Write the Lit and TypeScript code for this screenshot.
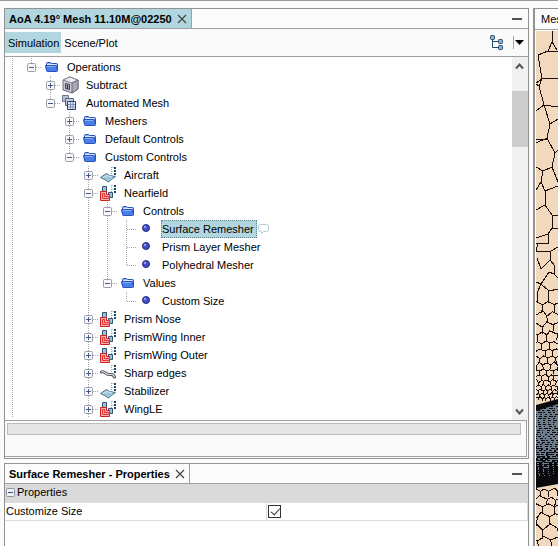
import { LitElement, html, svg, css } from "lit";
import { customElement } from "lit/decorators.js";
import { classMap } from "lit/directives/class-map.js";

// Guide codes, one per column: "|" line, " " blank, "+"/"-" expander (line goes on),
// "s" expander "-" that ends its line, "L" last leaf, "T" leaf with more below.
type Node = { guides: string; icon: string; label: string; selected?: boolean };

const NODES: Node[] = [
  { guides: "|s", icon: "folder", label: "Operations" },
  { guides: "| +", icon: "cube", label: "Subtract" },
  { guides: "| s", icon: "mesh", label: "Automated Mesh" },
  { guides: "|  +", icon: "folder", label: "Meshers" },
  { guides: "|  +", icon: "folder", label: "Default Controls" },
  { guides: "|  s", icon: "folder", label: "Custom Controls" },
  { guides: "|   +", icon: "surface", label: "Aircraft" },
  { guides: "|   -", icon: "volume", label: "Nearfield" },
  { guides: "|   |-", icon: "folder", label: "Controls" },
  { guides: "|   ||T", icon: "dot", label: "Surface Remesher", selected: true },
  { guides: "|   ||T", icon: "dot", label: "Prism Layer Mesher" },
  { guides: "|   ||L", icon: "dot", label: "Polyhedral Mesher" },
  { guides: "|   |s", icon: "folder", label: "Values" },
  { guides: "|   | L", icon: "dot", label: "Custom Size" },
  { guides: "|   +", icon: "volume", label: "Prism Nose" },
  { guides: "|   +", icon: "volume", label: "PrismWing Inner" },
  { guides: "|   +", icon: "volume", label: "PrismWing Outer" },
  { guides: "|   +", icon: "curve", label: "Sharp edges" },
  { guides: "|   +", icon: "surface", label: "Stabilizer" },
  { guides: "|   +", icon: "volume", label: "WingLE" },
];

const hierarchy = svg`
  <path d="M11.500 1v8" stroke="#8fa3b0" stroke-dasharray="1 1"/>
  <path d="M12 1.500h2M12 5.500h2" stroke="#c3cfd6"/>
  <path d="M14 1h2v2h-2zM14 4h2v2h-2zM14 7h2v2h-2z" fill="#1c4a66"/>`;

const ICONS: Record<string, unknown> = {
  folder: svg`
    <path d="M3.500 12.500v-7q0-1 1-1h3l1 1h5q1 0 1 1v6z" fill="#8fb2f5" stroke="#2c50ad"/>
    <path d="M4 6.500h9" stroke="#dbe8ff"/>
    <path d="M2.500 7.500h10q1 0 1 1l1 4q0 1-1 1h-9q-1 0-1-1z" fill="#4c7ee8" stroke="#2752bd"/>
    <path d="M4 8.500h8" stroke="#86abf7"/>`,
  cube: svg`
    <path d="M1 4l7-3 8 3v9l-6 4-9-3z" fill="#c9c9d6" stroke="#6c6c79"/>
    <path d="M1 4l7-3 8 3-6 3z" fill="#ececf2" stroke="#858593"/>
    <path d="M10 7l6-3v9l-6 4z" fill="#a9a9b8" stroke="#6c6c79"/>
    <path d="M3.500 7.500l4 1v5l-4-1z" fill="#a0a0b2" stroke="#454555"/>
    <path d="M5.500 9v4" stroke="#2f2f3e"/>`,
  mesh: svg`
    <path d="M0.500 1.500h6v6h-6z" fill="#b9c0d4" stroke="#6d7590"/>
    <path d="M3.500 4.500h8v7h-8z" fill="#c6cde0" stroke="#59637f"/>
    <path d="M5.500 7.500h8v8h-8z" fill="#e6ebf7" stroke="#2c3d6b"/>
    <path d="M8.500 8v7M11 8v7M6 10.500h7M6 13h7" stroke="#8091b8"/>`,
  surface: svg`${hierarchy}
    <path d="M0.500 11.500l6-4 3 2 6 1-4 3-3 2.500-3-2z" fill="#9fc6d8" stroke="#4a7488"/>
    <path d="M3 11.500l4-2 5 1.500" stroke="#d5eaf2" fill="none"/>`,
  volume: svg`${hierarchy}
    <path d="M2.500 2.500h4v7h-4zM8.500 8.500h4v5h-4z" fill="#a3bdd4" stroke="#31546f"/>
    <path d="M0.500 7.500h6v3h3v6h-9z" fill="#ffb3b0" stroke="#d21f1f"/>
    <path d="M2.500 9.500h2v3h5v2h-7z" fill="#ff9b9b" stroke="#e03a3a"/>`,
  curve: svg`${hierarchy}
    <path d="M1.500 8q2-1 4 1t5 1.500 4 2.500" stroke="#4a4a54" stroke-width="3" fill="none" stroke-linecap="round"/>
    <path d="M1.500 8q2-1 4 1t5 1.500 4 2.500" stroke="#dcdce4" stroke-width="1.200" fill="none" stroke-linecap="round"/>`,
  dot: svg`
    <circle cx="8" cy="8" r="3.500" fill="#3c4cc4" stroke="#20297c"/>
    <circle cx="7" cy="7" r="1.300" fill="#8f9cf5"/>`,
};

function guide(code: string) {
  const up = code !== " ";
  const down = "|+-T".includes(code) && up;
  const branch = "+-sTL".includes(code) && up;
  const box = "+-s".includes(code) && up;
  return svg`
    ${up ? svg`<path d="M7.500 0v9" class="dots"/>` : ""}
    ${down ? svg`<path d="M7.500 10v8" class="dots"/>` : ""}
    ${branch ? svg`<path d="M8 9.500h9" class="dots"/>` : ""}
    ${box ? svg`<rect x="3.500" y="5.500" width="8" height="8" rx="1" fill="#f6f7f9" stroke="#9a9ea6"/>
      <path d="M5 9.500h5" stroke="#4a5a8a"/>` : ""}
    ${code === "+" ? svg`<path d="M7.500 7v5" stroke="#4a5a8a"/>` : ""}`;
}

// Rows of jittered honeycomb cells; the size is interpolated from top to bottom.
function honeycomb(y0: number, y1: number, s0: number, s1: number) {
  let seed = 11;
  const rnd = () => (seed = (seed * 16807) % 2147483647) / 2147483647 - 0.5;
  let d = "";
  let y = y0;
  let odd = 0;
  while (y < y1) {
    const s = s0 + ((s1 - s0) * (y - y0)) / (y1 - y0);
    let k = 0;
    for (let x = -s + (odd * s) / 2; x < 24 + s; x += s / 2, k++) {
      const px = x + rnd() * s * 0.3;
      const py = y + (k % 2 ? s * 0.16 : -s * 0.16) + rnd() * s * 0.25;
      d += `${k ? "L" : "M"}${px.toFixed(1)} ${py.toFixed(1)}`;
      if (k % 2) d += `l${(rnd() * s * 0.2).toFixed(1)} ${(s * 0.6).toFixed(1)}M${px.toFixed(1)} ${py.toFixed(1)}`;
    }
    y += s * 0.85;
    odd = 1 - odd;
  }
  return d;
}

function dashes() {
  let seed = 5;
  const rnd = () => (seed = (seed * 16807) % 2147483647) / 2147483647;
  let d = "";
  for (let y = 406; y < 482; y += 2) {
    const dense = y > 440 ? (y - 440) / 30 : 0;
    for (let x = -rnd() * 4; x < 22; x += 5) {
      d += `M${x.toFixed(0)} ${y + 0.5}h${(1 + rnd() * 3 + dense * 3).toFixed(0)}`;
      if (rnd() < dense) d += `M${x.toFixed(0)} ${y + 1.5}h${(1 + dense * 3).toFixed(0)}`;
    }
  }
  return d;
}

const COARSE =
  "M16 31V42L12 51L2 55L6 79L0 83M16 42L21 50M12 51H22M6 79L22 78M6 79L3 86L0 84M3 86L8 105L22 107" +
  "M8 105L0 111M8 105L14 124L22 119M14 124L11 138L0 143M0 139H11M11 138L19 153L16 167L7 171L0 167" +
  "M19 153L22 150M16 167L22 182M7 171L5 182L9 191V205L0 210M5 182L0 190M9 191L22 186M9 205L16 215H22" +
  "M16 215V228L12 234V243H0M16 228H22M12 234L0 238M2 243L0 251H15L14 260L19 266L18 274L13 272L5 284L0 282" +
  "M15 251L22 247M14 260L5 269L1 258M18 274L22 278M5 284L13 291L22 289M5 284L1 293V302M13 291L12 303";

@customElement("app-root")
export class AppRoot extends LitElement {
  static styles = css`
    :host {
      display: block;
      min-height: 100vh;
      box-sizing: border-box;
      border-top: 1px solid #9b9b9b;
      background: #fcfbfc;
      color: #000;
      font: 11px/18px "Liberation Sans", Arial, sans-serif;
    }
    * { box-sizing: border-box; }
    button { font: inherit; color: inherit; border: 0; padding: 0; margin: 0; background: none; display: block; }
    svg { display: block; flex: none; }
    .page {
      display: grid;
      grid-template-columns: minmax(0, 1fr) 25px;
      gap: 4px;
      min-height: calc(100vh - 1px);
      padding: 7px 0 0 4px;
    }
    .column { display: flex; flex-direction: column; gap: 4px; }
    .panel { border: 1px solid #929292; display: flex; flex-direction: column; }
    .fill { flex: 1; border-bottom: 0; background: #fff; }
    .title { display: flex; align-items: stretch; height: 20px; background: #fbfbfb; border-bottom: 1px solid #a0a0a0; }
    .tab { display: flex; align-items: center; gap: 5px; margin: 0; padding: 0 4px 0 4px; font-size: 11px; font-weight: bold; border-right: 1px solid #a0a0a0; white-space: nowrap; }
    .active { background: #b1d6df; }
    .minimise { margin-left: auto; padding-right: 6px; }
    .toolbar { display: flex; align-items: center; height: 28px; background: #fafafa; border-bottom: 1px solid #a0a0a0; }
    .mode { height: 21px; padding: 0 2px 0 3px; }
    .tools { display: flex; align-items: center; gap: 9px; margin-left: auto; padding-right: 4px; }
    .drop { border-left: 1px solid #a5a5a5; padding: 4px 0 4px 1px; }
    .body { display: flex; background: #fff; }
    .tree { flex: 1; min-width: 0; padding: 1px 0 2px; overflow: hidden; }
    .row { display: flex; height: 18px; white-space: nowrap; }
    .icon { width: 23px; }
    .label { padding: 0 1px; height: 18px; }
    .selected { background: #b1d6df; outline: 1px dotted #5d8995; outline-offset: -1px; padding-right: 3px; }
    .note { margin-left: 1px; }
    .dots { stroke: #a8a8a8; stroke-dasharray: 1 1; fill: none; }
    .scroll { width: 16px; background: #f0f0f0; display: flex; flex-direction: column; }
    .thumb { height: 56px; margin: 17px 0 auto; background: #cdcdcd; }
    .status { border: 1px solid #a0a0a0; border-width: 1px 1px 1px 0; margin: 0 1px 1px 0; height: 37px; padding: 2px 5px 0 2px; background: #fafafa; }
    .progress { height: 12px; background: #e5e5e5; border: 1px solid #bdbdbd; }
    .props { border-collapse: collapse; width: 100%; table-layout: fixed; }
    .props th, .props td { padding: 0 1px; font-weight: normal; text-align: left; height: 18px; border-bottom: 1px solid #dcdcdc; line-height: 17px; }
    .props thead th { background: #dadada; padding: 0 1px; }
    .props td { border-left: 1px solid #dcdcdc; border-right: 1px solid #dcdcdc; }
    .group { display: flex; align-items: center; gap: 2px; }
    .check { appearance: none; display: block; width: 13px; height: 13px; margin: 0; border: 1px solid #333; background: #fff; position: relative; }
    .check:checked::before { content: ""; position: absolute; left: 4px; top: 0; width: 4px; height: 8px; border: solid #333; border-width: 0 1px 1px 0; transform: rotate(42deg); }
    .scene { border-right: 0; border-left: 2px solid #929292; }
    .scene .title { height: 21px; }
    .scene .tab { font-weight: normal; padding: 0 0 0 6px; border: 0; }
    .view { flex: 1; padding: 1px 0 0 1px; background: #fff; }
  `;

  private close() {
    return html`<button aria-label="Close"><svg width="10" height="10" fill="none" stroke="#444" stroke-width="1.200"><path d="M1 1l8 8M9 1l-8 8"/></svg></button>`;
  }

  private minimise() {
    return html`<button class="minimise" aria-label="Minimise"><svg width="10" height="2"><path d="M0 0h10v2h-10z" fill="#555"/></svg></button>`;
  }

  private row(n: Node) {
    return html`<div class="row" role="treeitem" aria-level=${n.guides.length} aria-selected=${n.selected ? "true" : "false"}>
      ${[...n.guides].map((g) => {
        const pic = html`<svg width="19" height="18">${guide(g)}</svg>`;
        return "+-s".includes(g) ? html`<button aria-label="Toggle ${n.label}">${pic}</button>` : pic;
      })}
      <svg class="icon" width="23" height="18">${ICONS[n.icon]}</svg>
      <span class=${classMap({ label: true, selected: !!n.selected })}>${n.label}</span>
      ${n.selected
        ? html`<svg class="note" width="12" height="18"><path d="M2.500 4.500h6q2 0 2 2v3q0 2-2 2h-3l-2 2v-2h-1q-2 0-2-2v-3q0-2 2-2z" fill="#fff" stroke="#b4cbdc"/></svg>`
        : ""}
    </div>`;
  }

  private arrow(d: string, name: string) {
    return html`<button aria-label=${name}><svg width="16" height="17"><path d=${d} fill="none" stroke="#555" stroke-width="2"/></svg></button>`;
  }

  render() {
    return html`<main class="page">
      <div class="column">
        <section class="panel">
          <header class="title">
            <h2 class="tab active">AoA 4.19° Mesh 11.10M@02250 ${this.close()}</h2>
            ${this.minimise()}
          </header>
          <nav class="toolbar">
            <button class="mode active">Simulation</button>
            <button class="mode">Scene/Plot</button>
            <div class="tools">
              <button aria-label="Show tree"><svg width="15" height="17" fill="#8fb3ca" stroke="#24466a">
                <path d="M3.500 4v9.500H9M3.500 7.500H9" fill="none"/>
                <rect x="1.500" y="1.500" width="4" height="4" rx="1"/><rect x="9.500" y="5.500" width="4" height="4" rx="1"/><rect x="9.500" y="11.500" width="4" height="4" rx="1"/>
              </svg></button>
              <button class="drop" aria-label="More"><svg width="9" height="5"><path d="M0 0h9l-4.500 5z"/></svg></button>
            </div>
          </nav>
          <div class="body">
            <div class="tree" role="tree">${NODES.map((n) => this.row(n))}</div>
            <div class="scroll">
              ${this.arrow("M4 11.500l3.500-4 3.500 4", "Scroll up")}
              <div class="thumb"></div>
              ${this.arrow("M4 6.500l3.500 4 3.500-4", "Scroll down")}
            </div>
          </div>
          <div class="status"><div class="progress"></div></div>
        </section>
        <section class="panel fill">
          <header class="title">
            <h2 class="tab">Surface Remesher - Properties ${this.close()}</h2>
            ${this.minimise()}
          </header>
          <table class="props">
            <thead><tr><th colspan="2"><div class="group">
              <button aria-label="Collapse"><svg width="9" height="9"><rect x="0.500" y="0.500" width="8" height="8" rx="1" fill="#eef0f5" stroke="#8e939c"/><path d="M2 4.500h5" stroke="#344a86"/></svg></button>Properties
            </div></th></tr></thead>
            <tbody><tr>
              <th scope="row"><label for="customize">Customize Size</label></th>
              <td><input class="check" id="customize" type="checkbox" checked /></td>
            </tr></tbody>
          </table>
        </section>
      </div>
      <section class="panel fill scene">
        <header class="title"><h2 class="tab">Mes</h2></header>
        <div class="view">
          <svg width="22" height="515" viewBox="0 31 22 515">
            <rect y="31" width="22" height="515" fill="#f2d9be"/>
            <path d=${COARSE} fill="none" stroke="#1c0f0a" shape-rendering="crispEdges"/>
            <path d=${honeycomb(303, 398, 13, 4)} fill="none" stroke="#1c0f0a" shape-rendering="crispEdges"/>
            <path d=${honeycomb(490, 552, 9, 18)} fill="none" stroke="#1c0f0a" shape-rendering="crispEdges"/>
            <path d="M0 405L22 399V484L0 488z" fill="#0a0a0c"/>
            <path d="M0 411L22 404V474L0 480z" fill="#6c7c8b"/>
            <path d=${dashes()} fill="none" stroke="#0a0a0c" shape-rendering="crispEdges"/>
          </svg>
        </div>
      </section>
    </main>`;
  }
}
